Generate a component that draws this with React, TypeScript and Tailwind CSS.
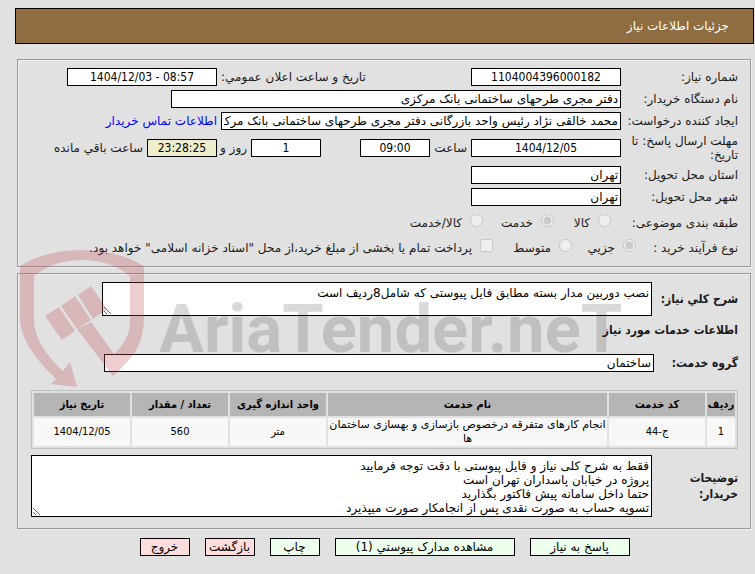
import type { ReactNode } from 'react';
import { clsx } from 'clsx';

const condensed = "font-['DejaVu_Sans_Condensed','DejaVu_Sans',sans-serif]";

// Etched frame: dark line with a light one along its lower right
const groove = 'border border-[#9a9a9a] shadow-[1px_1px_0_#eeeeee,inset_1px_1px_0_#eeeeee]';

interface FieldProps {
  id: string;
  value: string;
  label?: string;
  numeric?: boolean;
  className?: string;
}

function Field({ id, value, label, numeric, className }: FieldProps) {
  return (
    <input
      id={id}
      aria-label={label}
      defaultValue={value}
      readOnly
      dir={numeric ? 'ltr' : 'rtl'}
      className={clsx(
        'h-[18px] min-w-0 border border-black px-0.5 text-xs leading-4 text-black',
        numeric && ['text-center', condensed],
        className
      )}
    />
  );
}

function Row({ label, htmlFor, children }: { label: string; htmlFor?: string; children: ReactNode }) {
  return (
    <div className="flex items-center">
      <label htmlFor={htmlFor} className="w-[117px] shrink-0 leading-[14px]">
        {label}
      </label>
      {children}
    </div>
  );
}

interface ChoiceProps {
  name: string;
  label: string;
  type?: 'radio' | 'checkbox';
  checked?: boolean;
  className?: string;
}

function Choice({ name, label, type = 'radio', checked, className }: ChoiceProps) {
  return (
    <label className={clsx('flex shrink-0 items-center gap-2 whitespace-nowrap', className)}>
      <input type={type} name={name} defaultChecked={checked} disabled className="mb-1 size-[13px]" />
      <span>{label}</span>
    </label>
  );
}

function Watermark() {
  return (
    <svg aria-hidden="true" width="605" height="140" viewBox="0 0 605 140" className="pointer-events-none absolute top-[249px] left-[18px]" direction="ltr">
      <g fill="rgb(188,72,78)" fillOpacity="0.27">
        <path d="M2 17 Q28 1 64 1 Q100 1 126 17 V68 C126 90 118 105 108 114 Q102 121 95 127 L59 80 L73 73 L96 105 C106 95 112 87 112 71 V27 Q92 11 64 11 Q36 11 16 27 V71 C16 90 30 108 45 122 L52 113 L59 138 L33 135 L38 130 C20 112 2 92 2 68 Z" />
        <path d="M27 67 L41 58 L57 82 L44 91 Z" />
        <path d="M43 57 L57 47 L73 71 L59 80 Z" />
        <path d="M60 46 L73 37 L89 60 L75 70 Z" />
      </g>
      <text x="141" y="103" fill="#1e1e1e" fillOpacity="0.17" className="font-['Roboto',sans-serif] text-[67px] font-bold">
        AriaTender.neT
      </text>
    </svg>
  );
}

const columns = [
  { title: 'ردیف', width: 'w-7' },
  { title: 'کد خدمت', width: 'w-24' },
  { title: 'نام خدمت', width: '' },
  { title: 'واحد اندازه گیری', width: 'w-24' },
  { title: 'تعداد / مقدار', width: 'w-24' },
  { title: 'تاریخ نیاز', width: 'w-24' },
];

const services = [
  ['1', 'ج-44', 'انجام کارهای متفرقه درخصوص بازسازی و بهسازی ساختمان ها', 'متر', '560', '1404/12/05'],
];

const actions = [
  { title: 'پاسخ به نیاز', style: 'w-[100px] bg-[#eeffee]' },
  { title: 'مشاهده مدارک پیوستي (1)', style: 'w-[180px] bg-[#eeffee]' },
  { title: 'چاپ', style: 'w-[50px] bg-[#eeffee]' },
  { title: 'بازگشت', style: 'w-[50px] bg-[#ffdddd]' },
  { title: 'خروج', style: 'w-[50px] bg-[#ffdddd]' },
];

const notes = `فقط به شرح کلی نیاز و فایل پیوستی با دقت توجه فرمایید
پروژه در خیابان پاسداران تهران است
حتما داخل سامانه پیش فاکتور بگذارید
تسویه حساب به صورت نقدی پس از انجامکار صورت میپذیرد`;

export default function App() {
  return (
    <div dir="rtl" className="relative min-h-screen bg-[#e1e1e1] pt-2 pr-px pb-4 pl-[15px] font-['DejaVu_Sans',sans-serif] text-xs leading-4 text-[#1a1a1a]">
      <header className="flex h-9 items-center border border-black bg-[#8f6d40] px-6 text-white">
        <h1>جزئیات اطلاعات نیاز</h1>
      </header>

      <section className={clsx('mt-[15px] mr-[3px] ml-0.5 flex flex-col gap-1 pt-2 pr-3 pb-2.5 pl-4', groove)}>
        <Row label="شماره نیاز:" htmlFor="number">
          <Field id="number" value="1104004396000182" numeric className="w-[150px] bg-white" />
          <label htmlFor="announced" className="mr-[104px] ml-1 w-[146px] shrink-0 text-left whitespace-nowrap">
            تاریخ و ساعت اعلان عمومي:
          </label>
          <Field id="announced" value="1404/12/03 - 08:57" numeric className="w-[150px] bg-white" />
        </Row>
        <Row label="نام دستگاه خریدار:" htmlFor="buyer">
          <Field id="buyer" value="دفتر مجری طرحهای ساختمانی بانک مرکزی" className="w-[450px] bg-white" />
        </Row>
        <Row label="ایجاد کننده درخواست:" htmlFor="creator">
          <Field id="creator" value="محمد خالقی نژاد رئیس واحد بازرگانی دفتر مجری طرحهای ساختمانی بانک مرکزی" className="w-[400px] bg-white" />
          <a href="#contact" className="mr-1 shrink-0 text-[#0000ff]">
            اطلاعات تماس خریدار
          </a>
        </Row>
        <Row label="مهلت ارسال پاسخ: تا تاریخ:" htmlFor="deadline">
          <Field id="deadline" value="1404/12/05" numeric className="w-[150px] bg-white" />
          <label htmlFor="hour" className="mr-1 w-9 shrink-0">
            ساعت
          </label>
          <Field id="hour" value="09:00" numeric className="mr-px w-[70px] bg-white" />
          <Field id="days" label="روز" value="1" numeric className="mr-[39px] w-[70px] bg-white" />
          <label htmlFor="remaining" className="mr-1 w-[30px] shrink-0">
            روز و
          </label>
          <Field id="remaining" value="23:28:25" numeric className="w-[70px] bg-[#eeeecc]" />
          <span className="mr-1 shrink-0">ساعت باقي مانده</span>
        </Row>
        <Row label="استان محل تحویل:" htmlFor="province">
          <Field id="province" value="تهران" className="w-[150px] bg-white" />
        </Row>
        <Row label="شهر محل تحویل:" htmlFor="city">
          <Field id="city" value="تهران" className="w-[150px] bg-white" />
        </Row>
        <div className="mt-1 flex items-center">
          <span className="w-[127px] shrink-0">طبقه بندی موضوعی:</span>
          <Choice name="subject" label="کالا" className="w-[57px]" />
          <Choice name="subject" label="خدمت" checked className="w-[71px]" />
          <Choice name="subject" label="کالا/خدمت" />
        </div>
        <div className="mt-1 flex items-center">
          <span className="w-[102px] shrink-0">نوع فرآیند خرید :</span>
          <Choice name="process" label="جزیي" checked className="w-16" />
          <Choice name="process" label="متوسط" className="w-[79px]" />
          <Choice name="treasury" type="checkbox" label={'پرداخت تمام یا بخشی از مبلغ خرید،از محل "اسناد خزانه اسلامی" خواهد بود.'} />
        </div>
      </section>

      <section className={clsx('mt-1.5 mr-[3px] ml-0.5 pt-2 pr-3 pb-2 pl-[13px]', groove)}>
        <div className="flex items-center">
          <label htmlFor="summary" className={clsx('w-[86px] shrink-0 font-bold whitespace-nowrap', condensed)}>
            شرح کلي نیاز:
          </label>
          <textarea
            id="summary"
            readOnly
            defaultValue="نصب دوربین مدار بسته مطابق فایل پیوستی که شامل8ردیف است"
            className="h-[34px] w-[550px] min-w-0 border border-black bg-white px-0.5 py-[3px] leading-[14px] text-black"
          />
        </div>
        <h2 className={clsx('mt-1.5 font-bold', condensed)}>اطلاعات خدمات مورد نیاز</h2>
        <div className="mt-4 flex items-center">
          <label htmlFor="group" className={clsx('w-[84px] shrink-0 font-bold', condensed)}>
            گروه خدمت:
          </label>
          <Field id="group" value="ساختمان" className="w-[550px] bg-white" />
        </div>

        <table className="mt-[18px] w-full table-fixed border-separate border-spacing-0.5 border border-[#c0c0c0] text-center text-[11px] leading-[14px] text-black">
          <thead>
            <tr className="h-[23px] bg-[#b5b5b5]">
              {columns.map((column) => (
                <th key={column.title} className={clsx('p-0 whitespace-nowrap', condensed, column.width)}>
                  {column.title}
                </th>
              ))}
            </tr>
          </thead>
          <tbody>
            {services.map((service) => (
              <tr key={service[0]} className="bg-[#f7f7f7]">
                {service.map((cell, i) => (
                  <td key={columns[i].title} className={clsx('p-0', i !== 2 && condensed)}>
                    {cell}
                  </td>
                ))}
              </tr>
            ))}
          </tbody>
        </table>

        <div className="mt-1.5 mb-[3px] flex items-center">
          <label htmlFor="notes" className={clsx('w-[86px] shrink-0 pl-6 font-bold', condensed)}>
            توضیحات خریدار:
          </label>
          <textarea
            id="notes"
            readOnly
            defaultValue={notes}
            className="h-[62px] min-w-0 flex-1 overflow-hidden border border-black bg-white px-0.5 py-[3px] leading-[14px] text-black"
          />
        </div>
      </section>

      <div className="mt-[9px] flex flex-wrap justify-center gap-[15px]">
        {actions.map((action) => (
          <button key={action.title} type="button" className={clsx('h-[18px] border border-black leading-4 whitespace-nowrap text-black', action.style)}>
            {action.title}
          </button>
        ))}
      </div>

      <Watermark />
    </div>
  );
}
